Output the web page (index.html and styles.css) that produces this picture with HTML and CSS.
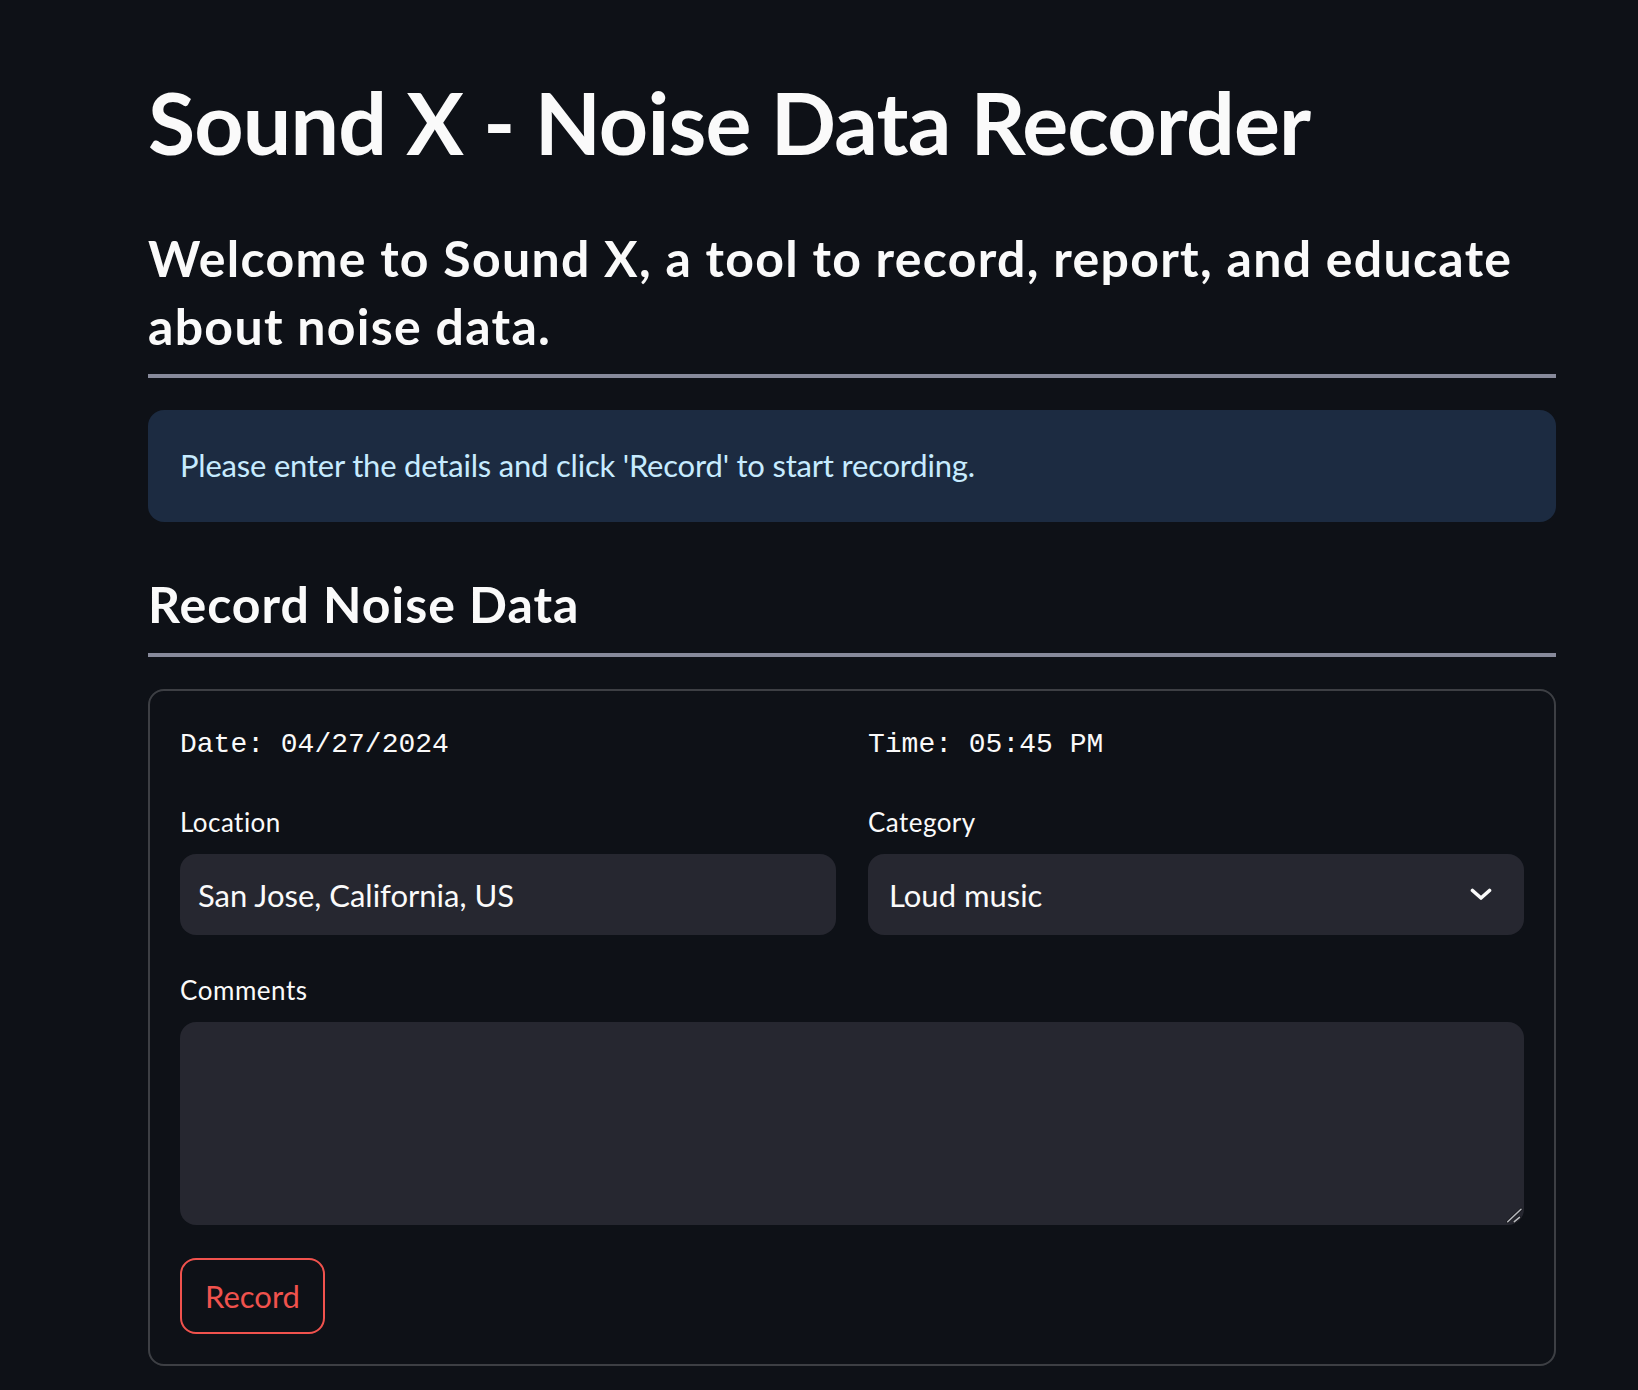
FILE: index.html
```html
<!DOCTYPE html>
<html lang="en">
<head>
<meta charset="utf-8">
<title>Sound X - Noise Data Recorder</title>
<link rel="stylesheet" href="styles.css">
</head>
<body>
<main class="page">
  <h1 class="title">Sound X - Noise Data Recorder</h1>
  <h3 class="subhead">Welcome to Sound X, a tool to record, report, and educate about noise data.</h3>
  <hr class="divider divider-top">
  <div class="info">Please enter the details and click 'Record' to start recording.</div>
  <h3 class="section">Record Noise Data</h3>
  <hr class="divider divider-section">
  <form class="form">
    <div class="cols">
      <div class="mono">Date: 04/27/2024</div>
      <div class="mono">Time: 05:45 PM</div>
    </div>
    <div class="cols cols-fields">
      <div class="field">
        <label class="label" for="loc">Location</label>
        <div class="input"><span class="input-text" id="loc">San Jose, California, US</span></div>
      </div>
      <div class="field">
        <label class="label">Category</label>
        <div class="input select">
          <span class="select-text">Loud music</span>
          <svg class="chevron" width="22" height="13" viewBox="0 0 22 13"><polyline points="2.5,2.5 11,10 19.5,2.5" fill="none" stroke="#fafafa" stroke-width="3.6" stroke-linecap="round" stroke-linejoin="round"/></svg>
        </div>
      </div>
    </div>
    <div class="field field-comments">
      <label class="label label-comments" for="comments">Comments</label>
      <div class="textarea-wrap">
        <textarea class="textarea" id="comments"></textarea>
        <svg class="grip" width="20" height="20" viewBox="0 0 20 20">
          <g stroke-linecap="round">
            <line x1="3.7" y1="16.7" x2="17" y2="4.3" stroke="#1a1b20" stroke-width="3.2"/>
            <line x1="10.3" y1="16.7" x2="15.5" y2="12.4" stroke="#1a1b20" stroke-width="3.2"/>
            <line x1="3.7" y1="16.7" x2="17" y2="4.3" stroke="#b8b9be" stroke-width="1.5"/>
            <line x1="10.3" y1="16.7" x2="15.5" y2="12.4" stroke="#b8b9be" stroke-width="1.5"/>
          </g>
        </svg>
      </div>
    </div>
    <button type="button" class="btn">Record</button>
  </form>
</main>
</body>
</html>
```

FILE: styles.css
```css
html, body {
  margin: 0;
  padding: 0;
  background: #0e1117;
}
body {
  color: #fafafa;
  font-family: Lato, "Noto Sans", sans-serif;
}
.page {
  width: 1408px;
  margin-left: 148px;
  padding-top: 70px;
  padding-bottom: 40px;
}
.title {
  margin: 0;
  font-size: 86px;
  line-height: 104px;
  font-weight: 700;
  letter-spacing: -0.8px;
}
.subhead {
  margin: 50px 0 0;
  font-size: 50px;
  line-height: 68px;
  font-weight: 700;
  letter-spacing: 1.3px;
}
.divider {
  margin: 0;
  border: none;
  height: 4px;
  background: #878a9b;
}
.divider-top { margin-top: 14px; }
.info {
  margin-top: 32px;
  background: #1c2b41;
  border-radius: 16px;
  padding: 31px 32px 33px;
  font-size: 31px;
  line-height: 48px;
  color: #c7ebff;
  letter-spacing: -0.2px;
}
.section {
  margin: 48px 0 0;
  font-size: 50px;
  line-height: 68px;
  font-weight: 700;
  letter-spacing: 1px;
}
.divider-section { margin-top: 15px; }
.form {
  margin-top: 32px;
  border: 2px solid rgba(250, 250, 250, 0.2);
  border-radius: 16px;
  padding: 30px;
}
.cols {
  display: grid;
  grid-template-columns: 1fr 1fr;
  column-gap: 32px;
}
.mono {
  font-family: "Liberation Mono", "DejaVu Sans Mono", monospace;
  font-size: 28px;
  line-height: 48px;
}
.cols-fields { margin-top: 35px; }
.label {
  display: block;
  font-size: 26px;
  line-height: 36px;
  margin-bottom: 14px;
  letter-spacing: 0.45px;
}
.input {
  height: 81px;
  background: #262730;
  border-radius: 16px;
  display: flex;
  align-items: center;
  padding: 0 18px;
  font-size: 31px;
}
.select { padding: 0 32px 0 21px; justify-content: space-between; }
.chevron { display: block; }
.field-comments { margin-top: 37px; }
.label-comments { letter-spacing: 0.55px; }
.textarea-wrap {
  position: relative;
  margin-top: 1px;
}
.textarea {
  display: block;
  box-sizing: border-box;
  width: 100%;
  height: 203px;
  margin: 0;
  background: #262730;
  border: none;
  border-radius: 16px;
  resize: none;
  color: #fafafa;
  font-family: Lato, sans-serif;
  font-size: 31px;
  padding: 16px 18px;
  outline: none;
}
.grip {
  position: absolute;
  right: 0;
  bottom: 0;
  display: block;
}
.btn {
  display: block;
  margin-top: 33px;
  height: 76px;
  width: 145px;
  background: transparent;
  border: 2px solid #f0524d;
  border-radius: 16px;
  color: #f0524d;
  font-family: Lato, sans-serif;
  font-size: 31px;
  padding: 0;
}
```
